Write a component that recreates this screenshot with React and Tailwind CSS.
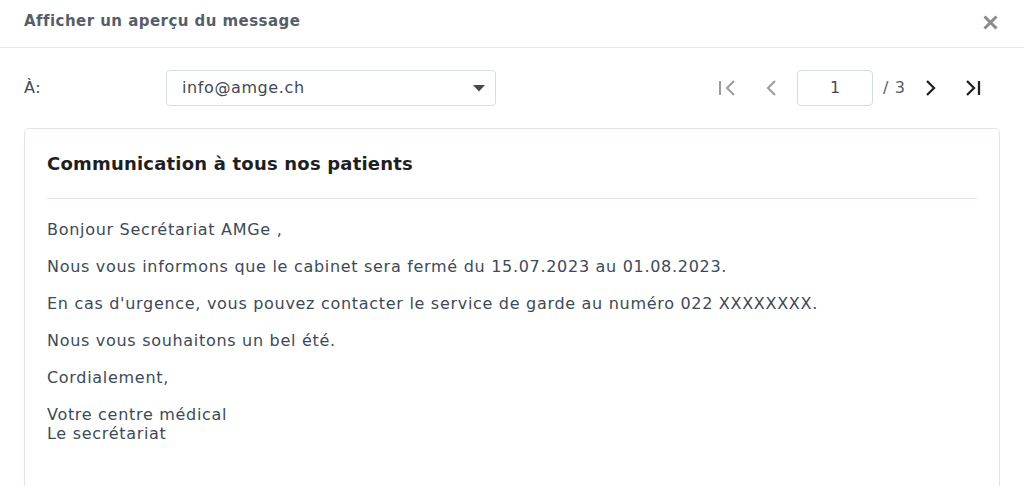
import React from "react";

const font = { fontFamily: '"DejaVu Sans", Verdana, sans-serif' };

export default function App() {
  const paras = [
    "Bonjour Secrétariat AMGe ,",
    "Nous vous informons que le cabinet sera fermé du 15.07.2023 au 01.08.2023.",
    "En cas d'urgence, vous pouvez contacter le service de garde au numéro 022 XXXXXXXX.",
    "Nous vous souhaitons un bel été.",
    "Cordialement,",
  ];
  return (
    <div className="w-[1024px] h-[486px] bg-white overflow-hidden" style={font}>
      <div className="h-[48px] flex items-center justify-between pl-[24px] pr-[26px] border-b border-[#e6eaf0]">
        <span className="text-[15px] tracking-[0.45px] font-bold text-[#565e69] -mt-[4px]">Afficher un aperçu du message</span>
        <svg width="15" height="15" viewBox="0 0 15 15" className="-mt-[3px]" stroke="#8c8c8c" strokeWidth="3" strokeLinecap="butt">
          <line x1="1.5" y1="1.5" x2="13.5" y2="13.5" />
          <line x1="13.5" y1="1.5" x2="1.5" y2="13.5" />
        </svg>
      </div>
      <div className="flex items-center h-[36px] mt-[22px] pl-[24px] pr-[42px]">
        <span className="w-[142px] text-[16px] tracking-[0.6px] text-[#3f4954]">À:</span>
        <div className="w-[330px] h-[36px] flex items-center justify-between pl-[15px] pr-[10px] border border-[#d6dce4] rounded-[4px]">
          <span className="text-[16px] tracking-[0.6px] text-[#3f4954]">info@amge.ch</span>
          <svg width="12" height="7" viewBox="0 0 12 7"><polygon points="0,0 12,0 6,6.5" fill="#474747" /></svg>
        </div>
        <div className="ml-auto flex items-center">
          <svg width="17" height="16" viewBox="0 0 17 16" fill="none" stroke="#9c9c9c" strokeWidth="2">
            <line x1="2" y1="1" x2="2" y2="15" />
            <polyline points="16,1 9,8 16,15" />
          </svg>
          <svg width="10" height="16" viewBox="0 0 10 16" fill="none" stroke="#9c9c9c" strokeWidth="2" className="ml-[31px]">
            <polyline points="9,1 2,8 9,15" />
          </svg>
          <div className="ml-[21px] w-[76px] h-[36px] flex items-center justify-center border border-[#d6dce4] rounded-[4px] text-[16px] text-[#3f4954]">1</div>
          <span className="ml-[10px] w-[28px] text-[16px] tracking-[0.6px] text-[#555d68]">/ 3</span>
          <svg width="10" height="16" viewBox="0 0 10 16" fill="none" stroke="#222222" strokeWidth="2.3" className="ml-[15px]">
            <polyline points="1,1 8,8 1,15" />
          </svg>
          <svg width="16" height="16" viewBox="0 0 16 16" fill="none" stroke="#222222" strokeWidth="2.3" className="ml-[30px]">
            <polyline points="1,1 8,8 1,15" />
            <line x1="13" y1="1" x2="13" y2="15" />
          </svg>
        </div>
      </div>
      <div className="mx-[24px] mt-[22px] border border-[#dfe4eb] rounded-[5px] h-[400px] px-[22px]">
        <div className="h-[70px] flex items-center border-b border-[#e2e6ec]">
          <span className="text-[18px] tracking-[0.2px] font-bold text-[#1f1f1f]">Communication à tous nos patients</span>
        </div>
        <div className="pt-[21px] text-[16px] tracking-[0.7px] leading-[19px] text-[#3d4957]">
          {paras.map((p, i) => (
            <p key={i} className="mb-[18px]">{p}</p>
          ))}
          <p>Votre centre médical<br />Le secrétariat</p>
        </div>
      </div>
    </div>
  );
}
